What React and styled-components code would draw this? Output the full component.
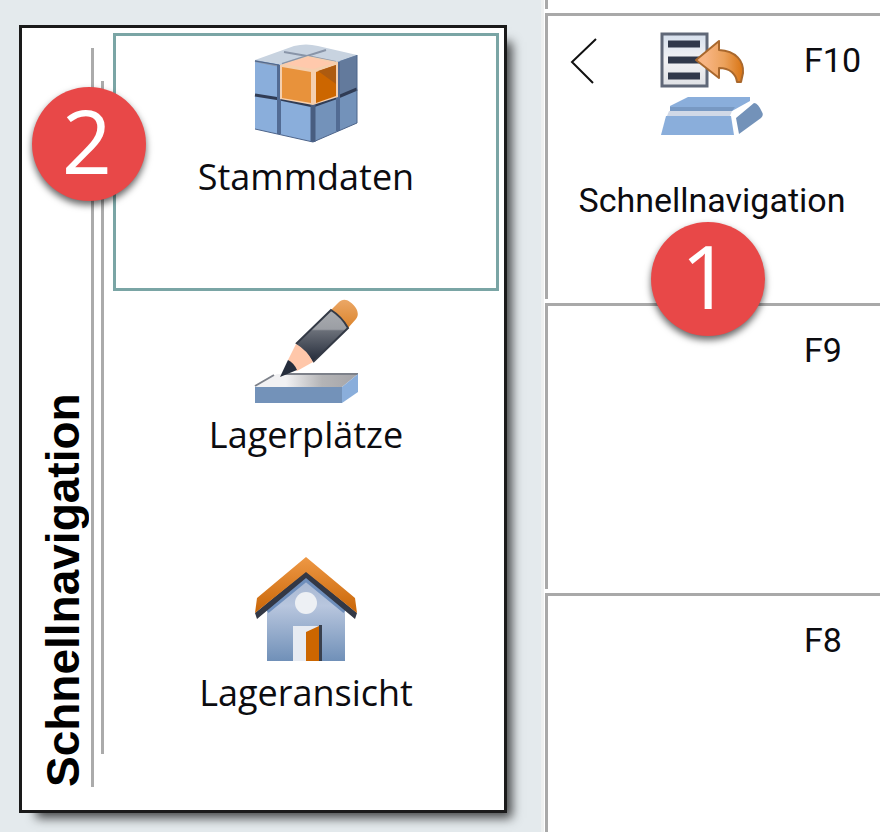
import React from "react";
import styled, { createGlobalStyle } from "styled-components";

const GlobalStyle = createGlobalStyle`
  * {
    box-sizing: border-box;
  }
  body {
    margin: 0;
    background-color: #e4eaed;
    color: #0c0c10;
  }
`;

const Page = styled.main`
  display: grid;
  grid-template-columns: minmax(0, 1fr) 339px;
  min-height: 100vh;
`;

const Desk = styled.div`
  padding: 25px 34px 19px 19px;
`;

const Panel = styled.section`
  position: relative;
  display: flex;
  background-color: white;
  border: 3px solid #1a1a1a;
  box-shadow: 11px 11px 10px -6px rgba(0, 0, 0, 0.7);
`;

const Spine = styled.div`
  display: flex;
  gap: 7px;
  padding: 20px 9px 23px 21px;
`;

const Title = styled.h2`
  width: 41px;
  margin: 0;
  font: bold 46px/41px "Liberation Sans", Arial, sans-serif;
  color: black;
  writing-mode: vertical-rl;
  transform: rotate(180deg);
`;

const Rule = styled.div`
  width: 3px;
  margin: ${(props) => props.$inset}px 0;
  background-color: #ababab;
`;

const List = styled.nav`
  flex: 1;
  display: flex;
  flex-direction: column;
  padding: 5px 5px 3px 0;
`;

const Item = styled.button`
  display: flex;
  flex-direction: column;
  align-items: center;
  gap: 8px;
  height: 258px;
  padding: 5px 0 0;
  background: none;
  border: 3px solid ${(props) => (props.$selected ? "#7aa5a5" : "transparent")};
  font: 36px/48px "Open Sans", "Noto Sans", sans-serif;
  color: inherit;
  cursor: pointer;
`;

const Icon = styled.svg`
  display: block;
  width: 104px;
  height: 104px;
`;

const Keys = styled.aside`
  display: flex;
  flex-direction: column;
  gap: 4px;
  padding-left: 1px;
  background-color: white;
  border-left: 3px solid #eef0f0;
`;

const KeyStub = styled.div`
  height: 9px;
  border-left: 3px solid #a9a9a9;
`;

const Key = styled.button`
  position: relative;
  display: grid;
  grid-template-columns: 1fr 104px 1fr;
  grid-template-rows: 104px 40px;
  row-gap: 44px;
  align-content: start;
  height: 286px;
  padding: 16px 4px 0 0;
  background: none;
  border: solid #a9a9a9;
  border-width: 3px 0 0 3px;
  font: 34px/40px Roboto, "Liberation Sans", sans-serif;
  color: inherit;
  text-align: left;
  cursor: pointer;

  &:last-child {
    flex: 1;
    height: auto;
  }
`;

const Chevron = styled.svg`
  grid-column: 1;
  width: 28px;
  height: 56px;
  margin-left: 22px;
`;

const KeyName = styled.span`
  grid-column: 3;
  grid-row: 1;
  padding: 8px 0 0 40px;
`;

const KeyLabel = styled.span`
  grid-column: 1 / -1;
  text-align: center;
`;

const Badge = styled.span`
  position: absolute;
  left: ${(props) => props.$left}px;
  top: ${(props) => props.$top}px;
  z-index: 1;
  width: 114px;
  height: 114px;
  padding-right: 4px;
  border-radius: 50%;
  background-color: #e84848;
  box-shadow: 0 4px 7px rgba(0, 0, 0, 0.6);
  font: 88px/106px "Open Sans", "Noto Sans", sans-serif;
  color: white;
  text-align: center;
`;

function CubeIcon() {
  return (
    <Icon viewBox="0 0 104 104" aria-hidden="true">
      <path d="M1 19L40 5Q52 2 64 5L103 14L59 29Z" fill="#c8d3e0" />
      <path d="M1 19L59 29V101L1 88Z" fill="#8aaedb" />
      <path d="M59 29L103 14V82L59 101Z" fill="#7392ba" />
      <path d="M86 20L103 14V48L86 54Z" fill="#637a9c" />
      <path d="M30 11L53 15L72 9M53 15L82 21M53 15L28 23M1 20L26 25" fill="none" stroke="#8995a8" strokeWidth="2" />
      <path d="M1 54L26 58L59 65L84 56L103 48" fill="none" stroke="#303c55" strokeWidth="3" />
      <path d="M25 24V93M84 21V90" stroke="#526b93" strokeWidth="4" />
      <path d="M59 62V101" stroke="#485d80" strokeWidth="5" />
      <path d="M1 88L59 101L103 82V14M1 20L25 24" fill="none" stroke="#4d648a" strokeWidth="1" />
      <path d="M26 24L54 15L84 21V56L59 64L26 58Z" fill="#f5cfae" />
      <path d="M30 23L54 16L80 22L59 28Z" fill="#ffc9ac" />
      <path d="M28 26L57 31V62L28 57Z" fill="#e8923b" />
      <path d="M62 31L82 24V55L62 62Z" fill="#cc6600" />
      <path d="M64 30L82 24V43Z" fill="#ad5b10" />
    </Icon>
  );
}

function PencilIcon() {
  return (
    <Icon viewBox="0 0 104 104" aria-hidden="true">
      <defs>
        <linearGradient id="slab" x1="0" x2="1">
          <stop offset="0.3" stopColor="#f1f1f3" />
          <stop offset="0.65" stopColor="#b4b4b6" />
          <stop offset="1" stopColor="#a4a4a8" />
        </linearGradient>
        <linearGradient id="barrel" x1="0" y1="0" x2="0" y2="1">
          <stop offset="0" stopColor="#aaacb0" />
          <stop offset="0.37" stopColor="#9b9ea4" />
          <stop offset="0.4" stopColor="#6a6f78" />
          <stop offset="1" stopColor="#232a39" />
        </linearGradient>
        <linearGradient id="eraser" x1="0" y1="0" x2="0" y2="1">
          <stop offset="0" stopColor="#eba766" />
          <stop offset="1" stopColor="#db842c" />
        </linearGradient>
      </defs>
      <path d="M1 88L23 75H104L88 88Z" fill="url(#slab)" />
      <path d="M1 87L20 76M30 75H104" stroke="#7d818a" strokeWidth="2" />
      <path d="M1 88H88V104H1Z" fill="#7392b9" />
      <path d="M88 88L104 75V93L88 104Z" fill="#8aaedb" />
      <path d="M77 11L84 4C88 0 92 0 96 3C103 8 106 15 102 20L94 29Q88 18 77 11Z" fill="url(#eraser)" />
      <path d="M77 11L42 45Q52 52 59 63L94 29Q88 18 77 11Z" fill="url(#barrel)" />
      <path d="M42 45L77 11Q88 18 94 29L59 63" fill="none" stroke="#343a46" strokeWidth="2" />
      <path d="M42 45L34 61L43 72L59 63Q53 51 42 45Z" fill="#ffc7aa" />
      <path d="M34 61L26 78L43 71Q40 64 34 61Z" fill="#252d3c" />
    </Icon>
  );
}

function HouseIcon() {
  return (
    <Icon viewBox="0 0 104 104" aria-hidden="true">
      <defs>
        <linearGradient id="wall" x1="0" y1="0" x2="0" y2="1">
          <stop offset="0" stopColor="#a5b5d0" />
          <stop offset="0.35" stopColor="#b8c6de" />
          <stop offset="1" stopColor="#7090b8" />
        </linearGradient>
        <linearGradient id="roof" x1="0" y1="0" x2="0" y2="1">
          <stop offset="0" stopColor="#ee9845" />
          <stop offset="1" stopColor="#c96607" />
        </linearGradient>
      </defs>
      <path d="M13 54L52 19L91 54V104H13Z" fill="url(#wall)" />
      <path d="M13 54L52 22L91 54" fill="none" stroke="#6f8fbc" strokeWidth="5" />
      <path d="M52 14L103 56L101 62L52 21L3 62L1 56Z" fill="#333845" />
      <path d="M52 0L101 41L103 56L52 15L1 56L3 41Z" fill="url(#roof)" />
      <circle cx="52" cy="46" r="11" fill="#edf0f4" />
      <path d="M39 69H66V104H39Z" fill="#e7ebf2" />
      <path d="M65 68H68V104H65Z" fill="#39404e" />
      <path d="M52 75L65 69V104H52Z" fill="#cc6600" />
    </Icon>
  );
}

function QuickNavIcon() {
  return (
    <Icon viewBox="0 0 104 104" aria-hidden="true">
      <defs>
        <linearGradient id="sheet" x1="0" y1="0" x2="0" y2="1">
          <stop offset="0" stopColor="#d6e0ed" />
          <stop offset="0.5" stopColor="#f2f2f4" />
          <stop offset="1" stopColor="#dfe1e5" />
        </linearGradient>
        <linearGradient id="arrow" x1="0" x2="1">
          <stop offset="0.2" stopColor="#f8b583" />
          <stop offset="0.6" stopColor="#eba15b" />
          <stop offset="1" stopColor="#d97413" />
        </linearGradient>
      </defs>
      <path d="M2 2H47V54H2Z" fill="url(#sheet)" stroke="#606878" strokeWidth="3" />
      <path d="M8 12H40M8 28H40M8 44H40" stroke="#30384a" strokeWidth="7" />
      <path
        d="M36 28L59 9V18C76 19 84 29 83 41L81 50H77C76 42 70 36 59 36V46Z"
        fill="url(#arrow)"
        stroke="#a9682d"
        strokeWidth="2"
        strokeLinejoin="round"
      />
      <path d="M28 65H90V69L72 79H10V74Z" fill="#8aaedb" />
      <path d="M10 75H75L72 79H10Z" fill="#7899c3" />
      <path d="M9 79H72L70 84H7Z" fill="#d1d9e7" />
      <path d="M6 84H71L74 103H1Z" fill="#8aaedb" />
      <path d="M94 71Q98 71 102 80Q104 83 101 86L79 102L76 86Z" fill="#7392b9" />
    </Icon>
  );
}

const items = [
  { label: "Stammdaten", icon: <CubeIcon />, selected: true },
  { label: "Lagerplätze", icon: <PencilIcon /> },
  { label: "Lageransicht", icon: <HouseIcon /> },
];

function App() {
  return (
    <>
      <GlobalStyle />
      <Page>
        <Desk>
          <Panel>
            <Spine>
              <Title>Schnellnavigation</Title>
              <Rule $inset={0} />
              <Rule $inset={33} />
            </Spine>
            <List>
              {items.map((item) => (
                <Item key={item.label} $selected={item.selected}>
                  {item.icon}
                  {item.label}
                </Item>
              ))}
            </List>
            <Badge $left={10} $top={59}>2</Badge>
          </Panel>
        </Desk>
        <Keys>
          <KeyStub />
          <Key>
            <Chevron viewBox="0 0 28 56" aria-hidden="true">
              <path d="M26 7L2 30L23 51" fill="none" stroke="#111" strokeWidth="2" />
            </Chevron>
            <QuickNavIcon />
            <KeyName>F10</KeyName>
            <KeyLabel>Schnellnavigation</KeyLabel>
            <Badge $left={103} $top={206}>1</Badge>
          </Key>
          <Key>
            <KeyName>F9</KeyName>
          </Key>
          <Key>
            <KeyName>F8</KeyName>
          </Key>
        </Keys>
      </Page>
    </>
  );
}

export default App;
